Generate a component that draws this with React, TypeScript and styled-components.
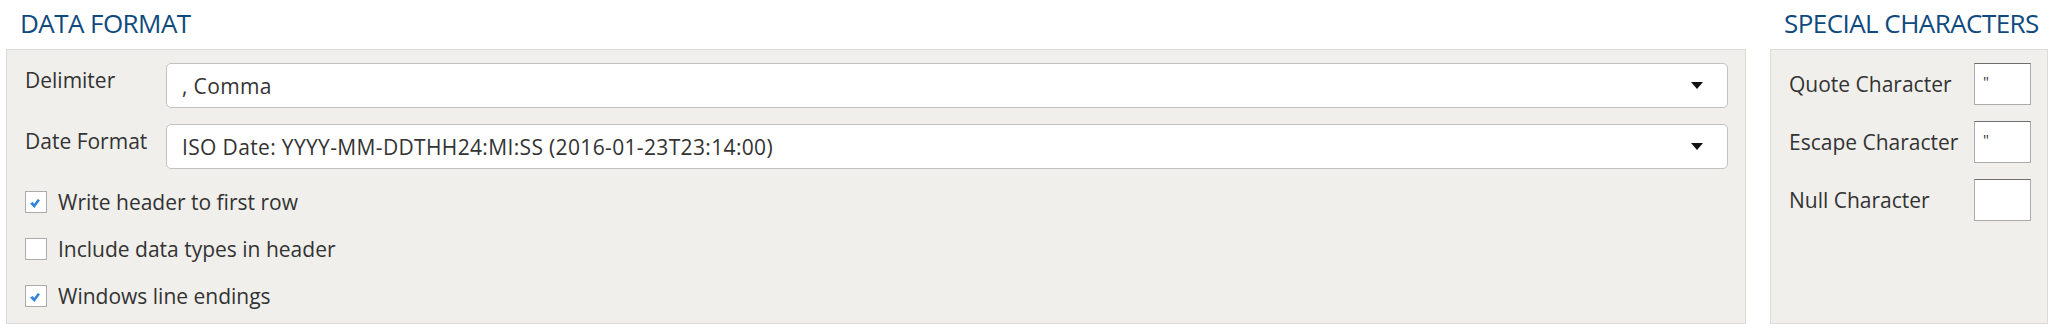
import React from "react";
import styled, { createGlobalStyle } from "styled-components";

const GlobalStyle = createGlobalStyle`
  html, body {
    margin: 0;
    padding: 0;
    background: #ffffff;
  }
  body {
    font-family: "Open Sans", "Noto Sans", sans-serif;
    color: #333333;
  }
`;

const Page = styled.div`
  display: flex;
  gap: 24px;
  padding: 0 9px 0 6px;
  width: 2057px;
  box-sizing: border-box;
`;

const Section = styled.section<{ $grow?: boolean; $width?: number }>`
  display: flex;
  flex-direction: column;
  flex: ${(p) => (p.$grow ? "1 1 auto" : "0 0 auto")};
  width: ${(p) => (p.$width ? `${p.$width}px` : "auto")};
`;

const SectionTitle = styled.h2`
  margin: 0;
  height: 49px;
  padding: 4px 0 0 14px;
  box-sizing: border-box;
  font-size: 26px;
  font-weight: 400;
  letter-spacing: -0.55px;
  line-height: 39px;
  color: #0f4a7e;
  white-space: nowrap;
`;

const Panel = styled.div`
  height: 275px;
  box-sizing: border-box;
  background: #f0efec;
  border: 1px solid #dcdbd8;
  display: flex;
  flex-direction: column;
`;

const FormPanel = styled(Panel)`
  padding: 13px 17px 0 18px;
`;

const CharPanel = styled(Panel)`
  padding: 13px 16px 0 18px;
  gap: 16px;
`;

const FieldRow = styled.div`
  display: flex;
  align-items: flex-start;
  margin-bottom: 16px;
`;

const FieldLabel = styled.div`
  width: 141px;
  flex: 0 0 141px;
  font-size: 21px;
  line-height: 28px;
  padding-top: 3px;
`;

const SelectBox = styled.div`
  flex: 1;
  height: 45px;
  box-sizing: border-box;
  background: #ffffff;
  border: 1px solid #c2c2c2;
  border-radius: 5px;
  display: flex;
  align-items: center;
  padding: 0 24px 0 15px;
`;

const SelectValue = styled.span`
  flex: 1;
  font-size: 21px;
  letter-spacing: 0.35px;
  color: #333333;
  white-space: nowrap;
`;

const Caret = styled.svg`
  width: 12px;
  height: 7px;
  display: block;
`;

const CheckList = styled.div`
  display: flex;
  flex-direction: column;
  gap: 25px;
  margin-top: 6px;
`;

const CheckRow = styled.label`
  display: flex;
  align-items: center;
  gap: 11px;
  font-size: 21px;
  line-height: 22px;
`;

const CheckBox = styled.span`
  width: 22px;
  height: 22px;
  box-sizing: border-box;
  background: #ffffff;
  border: 1px solid #ababab;
  display: flex;
  align-items: center;
  justify-content: center;
  flex: 0 0 22px;
  padding: 3px 2px 0 0;
`;

const CharRow = styled.div`
  display: flex;
  align-items: center;
  justify-content: space-between;
  height: 42px;
`;

const CharLabel = styled.span`
  font-size: 21px;
  white-space: nowrap;
`;

const CharInput = styled.input`
  width: 57px;
  height: 42px;
  box-sizing: border-box;
  border: 1px solid #ababab;
  border-top-color: #6e6e6e;
  background: #ffffff;
  padding: 0 0 6px 8px;
  font-family: "Open Sans", sans-serif;
  font-size: 15px;
  color: #333333;
  outline: none;
`;

const selects = [
  { label: "Delimiter", value: ", Comma" },
  { label: "Date Format", value: "ISO Date: YYYY-MM-DDTHH24:MI:SS (2016-01-23T23:14:00)" },
];

const checks = [
  { label: "Write header to first row", checked: true },
  { label: "Include data types in header", checked: false },
  { label: "Windows line endings", checked: true },
];

const chars = [
  { label: "Quote Character", value: '"' },
  { label: "Escape Character", value: '"' },
  { label: "Null Character", value: "" },
];

const CheckMark = () => (
  <svg width="10" height="9" viewBox="0 0 10 9">
    <path d="M0 4.6 L2.8 3 L4.1 4.9 L7.8 0 L10 1.3 L4.4 9 Z" fill="#2f83dc" />
  </svg>
);

const App: React.FC = () => {
  return (
    <>
      <GlobalStyle />
      <Page>
        <Section $grow>
          <SectionTitle>DATA FORMAT</SectionTitle>
          <FormPanel>
            {selects.map((s) => (
              <FieldRow key={s.label}>
                <FieldLabel>{s.label}</FieldLabel>
                <SelectBox>
                  <SelectValue>{s.value}</SelectValue>
                  <Caret viewBox="0 0 12 7">
                    <path d="M0 0 H12 L6 7 Z" fill="#111111" />
                  </Caret>
                </SelectBox>
              </FieldRow>
            ))}
            <CheckList>
              {checks.map((c) => (
                <CheckRow key={c.label}>
                  <CheckBox>{c.checked && <CheckMark />}</CheckBox>
                  {c.label}
                </CheckRow>
              ))}
            </CheckList>
          </FormPanel>
        </Section>
        <Section $width={278}>
          <SectionTitle>SPECIAL CHARACTERS</SectionTitle>
          <CharPanel>
            {chars.map((c) => (
              <CharRow key={c.label}>
                <CharLabel>{c.label}</CharLabel>
                <CharInput value={c.value} readOnly />
              </CharRow>
            ))}
          </CharPanel>
        </Section>
      </Page>
    </>
  );
};

export default App;
